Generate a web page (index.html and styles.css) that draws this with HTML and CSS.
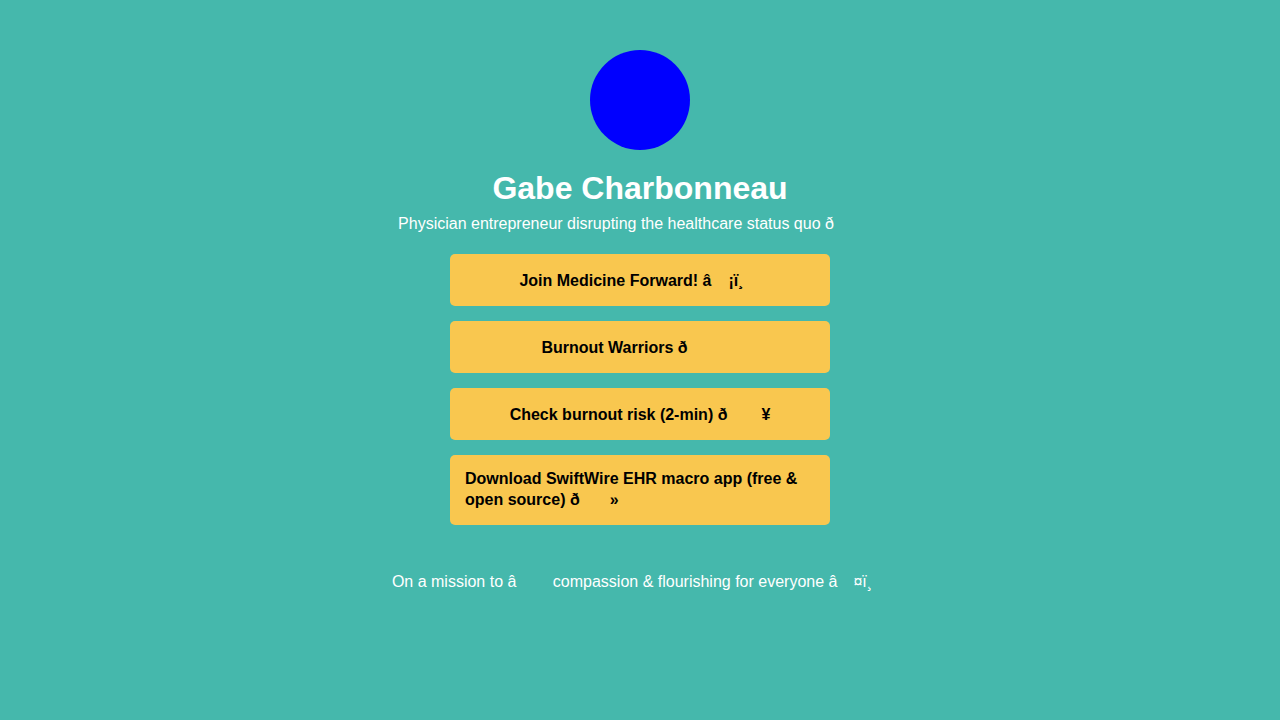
FILE: index.html
```html
<!DOCTYPE html>
<html lang="en">
<head>
<meta charset="utf-8">
<title>Gabe Charbonneau</title>
<link rel="stylesheet" href="styles.css">
</head>
<body>
<main class="page">
  <div class="avatar"></div>
  <h1 class="name">Gabe Charbonneau</h1>
  <p class="bio">Physician entrepreneur disrupting the healthcare status quo ð<span class="cc"></span><span class="cc"></span><span class="cc"></span></p>
  <nav class="links">
    <a class="link" href="#"><span class="label">Join Medicine Forward! â<span class="cc b"></span>¡ï¸<span class="cc b"></span></span></a>
    <a class="link" href="#"><span class="label">Burnout Warriors ð<span class="cc b"></span><span class="cc b"></span><span class="cc b"></span></span></a>
    <a class="link" href="#"><span class="label">Check burnout risk (2-min) ð<span class="cc b"></span><span class="cc b"></span>¥</span></a>
    <a class="link" href="#"><span class="label">Download SwiftWire EHR macro app (free &amp; open source) ð<span class="cc s"></span><span class="cc s"></span>»</span></a>
  </nav>
  <p class="mission">On a mission to â<span class="cc"></span><span class="cc"></span> compassion &amp; flourishing for everyone â<span class="cc"></span>¤ï¸<span class="cc"></span></p>
</main>
</body>
</html>
```

FILE: styles.css
```css
html, body {
  margin: 0;
  padding: 0;
}

body {
  background: #45b8ac;
  color: #ffffff;
  font-family: "Liberation Sans", Arial, Helvetica, sans-serif;
  font-size: 16px;
  min-height: 720px;
}

.page {
  display: flex;
  flex-direction: column;
  align-items: center;
  padding-top: 50px;
}

.avatar {
  width: 100px;
  height: 100px;
  border-radius: 50%;
  background: #0000ff;
}

.name {
  margin: 20px 0 0;
  font-size: 32px;
  font-weight: 700;
  line-height: normal;
}

.bio {
  margin: 5px 0 0;
  line-height: normal;
}

.cc {
  display: inline-block;
  width: 16px;
  height: 22px;
  vertical-align: -5px;
}

.cc.b {
  width: 17px;
}

.cc.s {
  width: 15px;
}

.links {
  display: flex;
  flex-direction: column;
  gap: 15px;
  margin-top: 20px;
  width: 380px;
}

.link {
  display: flex;
  justify-content: center;
  align-items: center;
  padding: 15px;
  border-radius: 5px;
  background: #f9c74f;
  color: #000000;
  font-weight: 700;
  text-decoration: none;
  line-height: normal;
}

.mission {
  margin: 45px 0 0;
  line-height: normal;
}
```
